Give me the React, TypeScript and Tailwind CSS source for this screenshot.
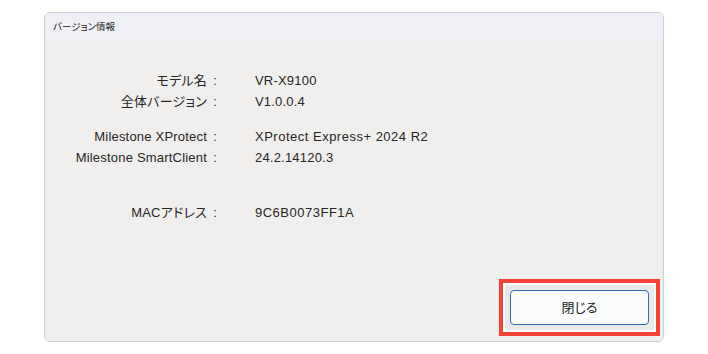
export default function App() {
  return (
    <div
      className="w-[708px] h-[354px] bg-white pt-[12px] pl-[44px] text-[#262626]"
      style={{ fontFamily: '"Liberation Sans", "Noto Sans CJK JP", sans-serif' }}
    >
      {/* Window */}
      <div className="w-[620px] h-[330px] flex flex-col border border-[#cdcdcd] rounded-[6px] overflow-hidden">
        {/* Title bar */}
        <div className="h-[28px] bg-[#eef0f5] flex items-center pl-[8px] text-[9.5px] text-[#222] [font-feature-settings:'palt']">
          バージョン情報
        </div>

        {/* Body */}
        <div className="flex-1 bg-[#f0efed] flex flex-col pt-[29px]">
          <div className="grid grid-cols-[172px_1fr] gap-x-[38px] text-[13px]">
            <Row label="モデル名" value="VR-X9100" />
            <Row label="全体バージョン" value="V1.0.0.4" />
          </div>

          <div className="grid grid-cols-[172px_1fr] gap-x-[38px] text-[13px] mt-[14px]">
            <Row label="Milestone XProtect" value="XProtect Express+ 2024 R2" wide />
            <Row label="Milestone SmartClient" value="24.2.14120.3" />
          </div>

          <div className="grid grid-cols-[172px_1fr] gap-x-[38px] text-[13px] mt-[34px]">
            <Row label="MACアドレス" value="9C6B0073FF1A" wide />
          </div>

          {/* Footer */}
          <div className="mt-auto flex justify-end pr-[3px] pb-[5px]">
            <div className="border-4 border-[#f44336] bg-white p-[2px]">
              <div className="bg-[#e9e9e9] p-[5px]">
                <button className="w-[139px] h-[35px] bg-[#fbfdfd] border border-[#2d6cae] rounded-[4px] text-[13px] text-[#1b1b1b] [font-feature-settings:'palt']">
                  閉じる
                </button>
              </div>
            </div>
          </div>
        </div>
      </div>
    </div>
  );
}

function Row({ label, value, wide }: { label: string; value: string; wide?: boolean }) {
  return (
    <>
      <div className="h-[21px] leading-[21px] flex justify-end items-center whitespace-nowrap tracking-[0.2px] [font-feature-settings:'palt']">
        <span>{label}</span>
        <span className="w-[10px] text-right">:</span>
      </div>
      <div
        className={
          wide
            ? "h-[21px] leading-[21px] whitespace-nowrap tracking-[0.5px]"
            : "h-[21px] leading-[21px] whitespace-nowrap tracking-[0.2px]"
        }
      >
        {value}
      </div>
    </>
  );
}
